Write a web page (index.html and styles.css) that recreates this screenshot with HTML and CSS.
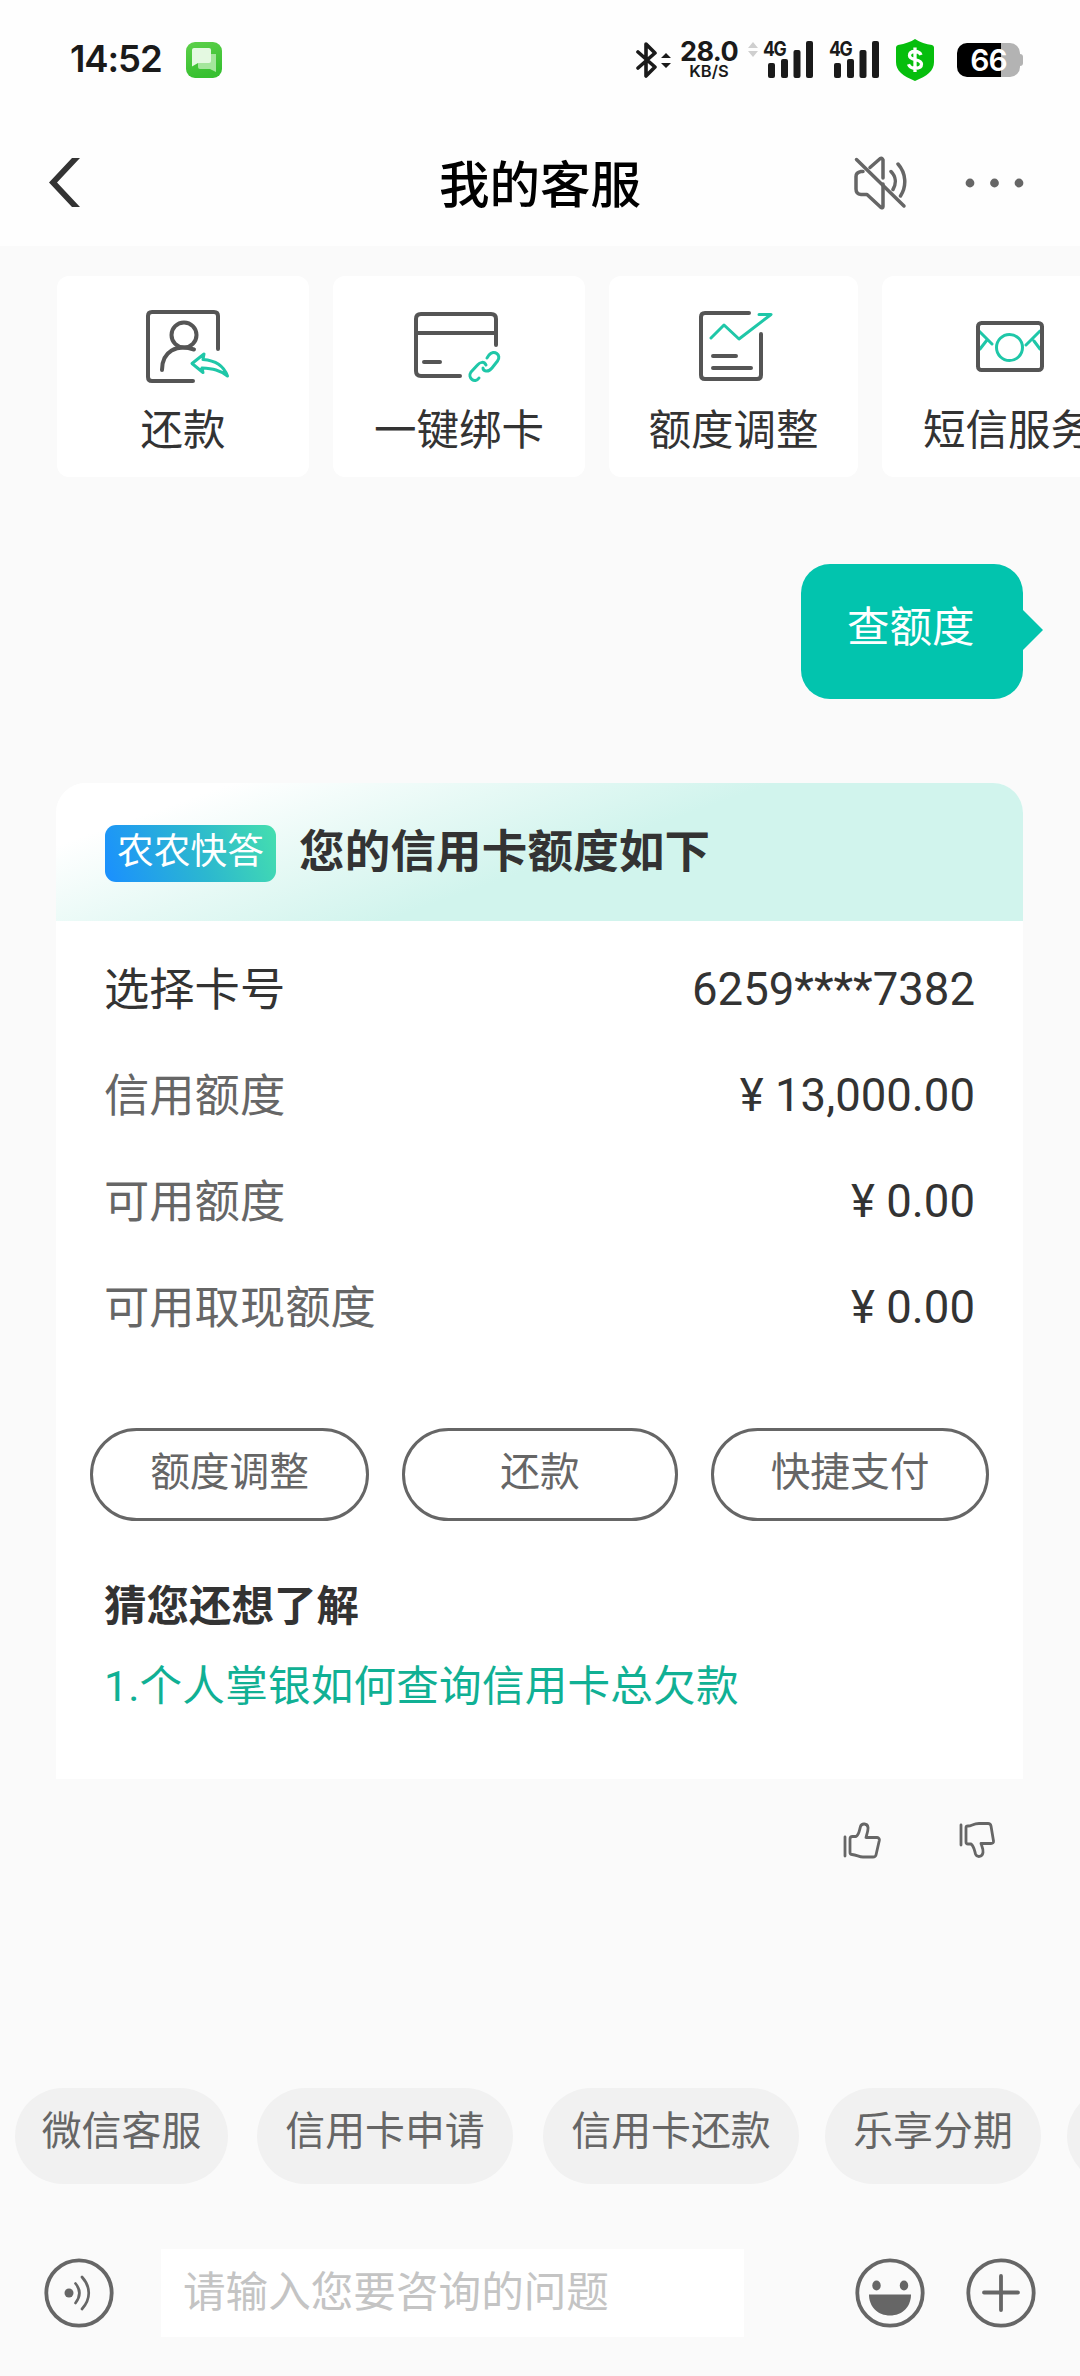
FILE: index.html
```html
<!DOCTYPE html>
<html lang="zh-CN">
<head>
<meta charset="utf-8">
<title>我的客服</title>
<link rel="stylesheet" href="styles.css">
</head>
<body>
<div class="screen">
  <div class="status">
    <span class="clock">14:52</span>
    <svg class="app-icon" width="36" height="36" viewBox="0 0 36 36">
      <defs>
        <linearGradient id="msg" x1="0" y1="0" x2="0.3" y2="1"><stop offset="0" stop-color="#5dd04a"/><stop offset="1" stop-color="#37c030"/></linearGradient>
      </defs>
      <rect width="36" height="36" rx="9" fill="url(#msg)"/>
      <path d="M12 12h18v18l-6-3H14q-2 0-2-2z" fill="#a4e69c"/>
      <path d="M8 6h15q2 0 2 2v11q0 2-2 2H12l-6 3.500V8q0-2 2-2z" fill="#e4f9e1"/>
    </svg>
    <div class="status-right">
      <svg class="bt" width="36" height="38" viewBox="0 0 36 38" fill="none">
        <path d="M2 11l17 15-9 9V3l9 9L2 27" stroke="#1a1a1a" stroke-width="3.600" stroke-linejoin="round" stroke-linecap="round"/>
        <path d="M25 17l5-5 5 5zM25 22l5 5 5-5z" fill="#1a1a1a"/>
      </svg>
      <div class="speed"><span class="speed-num">28.0</span><span class="speed-unit">KB/S</span></div>
      <svg class="updown" width="10" height="16" viewBox="0 0 10 16" fill="#cfcfcf"><path d="M0 6l5-6 5 6zM0 9l5 6 5-6z"/></svg>
      <div class="signal"><span class="net">4G</span>
        <svg width="46" height="37" viewBox="0 0 46 37" fill="#1a1a1a"><rect y="22" width="7" height="15" rx="2"/><rect x="13" y="18" width="7" height="19" rx="2"/><rect x="25.500" y="9" width="7" height="28" rx="2"/><rect x="38" width="7" height="37" rx="2"/></svg>
      </div>
      <div class="signal"><span class="net">4G</span>
        <svg width="46" height="37" viewBox="0 0 46 37" fill="#1a1a1a"><rect y="22" width="7" height="15" rx="2"/><rect x="13" y="18" width="7" height="19" rx="2"/><rect x="25.500" y="9" width="7" height="28" rx="2"/><rect x="38" width="7" height="37" rx="2"/></svg>
      </div>
      <svg class="shield" width="38" height="42" viewBox="0 0 38 42">
        <path d="M19 0c5 3.500 11 5 17 6q2 .5 2 2.500V23c0 9-7 14-19 19C7 37 0 32 0 23V8.500Q0 6.500 2 6 13 4 19 0z" fill="#06be0d"/>
        <path d="M25 16c-1-2.500-3-3.500-6-3.500-3.500 0-5.500 1.500-5.500 4 0 5.500 12 3 12 8.500 0 3-3 4.300-6.500 4.300s-5.500-1.300-6.500-4M19 8.500V33" stroke="#fff" stroke-width="3.300" fill="none"/>
      </svg>
      <div class="battery">66</div>
    </div>
  </div>

  <div class="nav">
    <svg class="back" width="31" height="49" viewBox="0 0 31 49"><path d="M23 0h8L8 24.500 31 49h-8L0 24.500z" fill="#333"/></svg>
    <h1>我的客服</h1>
    <svg class="mute" width="54" height="54" viewBox="0 0 54 54" fill="none" stroke="#666" stroke-width="3.500" stroke-linecap="round" stroke-linejoin="round">
      <path d="M3.500 3.500L51 50"/>
      <path d="M10 15.500H8q-5 1-5 5V33q0 5 5 5.500h6L28 51.500q2 1 2-1V28M30 22V4q-1-2.500-3-1.200L17 11.500"/>
      <path d="M38 15.500c5 5 5.500 12 2 18M45 8c8 9 9 22 2.500 32"/>
    </svg>
    <svg class="more" width="60" height="12" viewBox="0 0 60 12" fill="#666"><circle cx="5" cy="6" r="4.400"/><circle cx="29.500" cy="6" r="4.400"/><circle cx="54" cy="6" r="4.400"/></svg>
  </div>

  <div class="tiles">
    <div class="tile">
      <svg width="76" height="76" viewBox="0 0 76 76" overflow="visible" fill="none" stroke-linecap="round" stroke-linejoin="round">
        <path d="M48 73H7q-4 0-4-4V8q0-4 4-4H69q4 0 4 4V41M17 62C17 43 32 36 49 41.500" stroke="#555" stroke-width="4"/>
        <circle cx="39" cy="27" r="12.500" stroke="#555" stroke-width="4"/>
        <path d="M47 55.500l12-9.500-1 5.500c14 1 21 7 24.500 16.500C75 62 68 60.500 57 60l1 4.500z" stroke="#1fc7a8" stroke-width="3"/>
      </svg>
      <span>还款</span>
    </div>
    <div class="tile">
      <svg width="92" height="76" viewBox="0 0 92 76" fill="none" stroke-linecap="round" stroke-linejoin="round">
        <path d="M47 68H8q-5 0-5-5V11q0-5 5-5H78q5 0 5 5V37M3 25H83M11 54H27" stroke="#555" stroke-width="4"/>
        <path d="M74 50l2-3c5-6 13 0 8.500 6L79 60c-4 5-9 3-9 0M73 57c-2-4-6-3-8.500 0L58 64c-4 6 4 12 8 6" stroke="#1fc7a8" stroke-width="3"/>
      </svg>
      <span>一键绑卡</span>
    </div>
    <div class="tile tile-narrow">
      <svg width="74" height="76" viewBox="0 0 74 76" overflow="visible" fill="none" stroke-linecap="round" stroke-linejoin="round">
        <path d="M52 5H8Q4 5 4 9V67q0 4 4 4H60q4 0 4-4V26M16 48H39M16 60H54" stroke="#555" stroke-width="4"/>
        <path d="M14 30L27 17 42 31 74 6.500H62" stroke="#1fc7a8" stroke-width="3"/>
      </svg>
      <span>额度调整</span>
    </div>
    <div class="tile">
      <svg width="67" height="76" viewBox="0 0 67 76" overflow="visible" fill="none" stroke-linecap="round" stroke-linejoin="round">
        <path d="M4 23L17 36M5 41L12 32M65 23L51 37M65 41L59 33" stroke="#1fc7a8" stroke-width="3"/>
        <circle cx="34.500" cy="39.500" r="13" stroke="#1fc7a8" stroke-width="3"/>
        <rect x="3" y="15" width="64" height="47" rx="3.500" stroke="#555" stroke-width="4"/>
      </svg>
      <span>短信服务</span>
    </div>
  </div>

  <div class="bubble">查额度</div>

  <div class="card">
    <div class="card-head"><span class="badge">农农快答</span><h2>您的信用卡额度如下</h2></div>
    <dl class="rows">
      <div class="row"><dt class="dark">选择卡号</dt><dd>6259****7382</dd></div>
      <div class="row"><dt>信用额度</dt><dd>¥ 13,000.00</dd></div>
      <div class="row"><dt>可用额度</dt><dd>¥ 0.00</dd></div>
      <div class="row"><dt>可用取现额度</dt><dd>¥ 0.00</dd></div>
    </dl>
    <div class="actions"><button>额度调整</button><button>还款</button><button>快捷支付</button></div>
    <h3>猜您还想了解</h3>
    <a class="question">1.个人掌银如何查询信用卡总欠款</a>
  </div>

  <div class="feedback">
    <svg width="38" height="38" viewBox="0 0 38 38" fill="none" stroke="#666" stroke-width="2.800" stroke-linecap="round" stroke-linejoin="round">
      <path d="M2 15V34M7 17q0-2.500 2.500-2.500H13c3-1.500 3-5 4.500-10 1-3.500 7-3.500 7.500 1 .3 3-1 6-2 10H34q2.800.5 2.300 3L33 33q-.5 2-3 2H20c-4 0-6-2-11-2.500q-2 0-2-2z"/>
    </svg>
    <svg width="38" height="38" viewBox="0 0 38 38" fill="none" stroke="#666" stroke-width="2.800" stroke-linecap="round" stroke-linejoin="round">
      <path d="M2 3V23M7 5.500q0-1.500 2-1.500c4 0 5-2.500 11-2.500h9q2.500 0 3 2.500l2.500 15q.3 2.500-2.500 2.500H22c1 3 2.500 6 2 9-.8 5-6 5-7.500 1.500-1-3.500-1.500-8-4.500-10H9q-2 0-2-2z"/>
    </svg>
  </div>

  <div class="chips">
    <span class="chip chip-a">微信客服</span><span class="chip chip-b">信用卡申请</span><span class="chip chip-c">信用卡还款</span><span class="chip chip-d">乐享分期</span><span class="chip chip-e"></span>
  </div>

  <div class="composer">
    <svg class="voice" width="70" height="70" viewBox="0 0 70 70" fill="none" stroke="#666" stroke-linecap="round">
      <circle cx="35" cy="35" r="32.700" stroke-width="3.800"/>
      <circle cx="25" cy="35" r="4.500" fill="#666" stroke="none"/>
      <path d="M31.500 25.500c5 6 5 13 0 19.500M38 19c9 10 9 22 0 32" stroke-width="2.700"/>
    </svg>
    <div class="input">请输入您要咨询的问题</div>
    <svg class="smile" width="70" height="70" viewBox="0 0 70 70">
      <circle cx="35" cy="35" r="32.700" fill="none" stroke="#666" stroke-width="3.800"/>
      <ellipse cx="21.500" cy="27.500" rx="4.200" ry="5" fill="#666"/><ellipse cx="49" cy="27.500" rx="4.200" ry="5" fill="#666"/>
      <path d="M14 36.500H56C56 49 47 57.500 35 57.500S14 49 14 36.500z" fill="#666"/>
    </svg>
    <svg width="70" height="70" viewBox="0 0 70 70" fill="none" stroke="#666" stroke-width="3.800" stroke-linecap="round">
      <circle cx="35" cy="35" r="32.700"/><path d="M35 18V52M18 34.500H52"/>
    </svg>
  </div>
</div>
</body>
</html>
```
FILE: styles.css
```css
* { box-sizing: border-box; margin: 0; padding: 0; }
body {
  background: #fafafa;
  font-family: "Noto Sans CJK SC", sans-serif;
  color: #333;
}
svg { display: block; flex: none; }
.screen {
  width: 1080px;
  height: 2376px;
  overflow: hidden;
  display: flex;
  flex-direction: column;
}

/* system status bar */
.status {
  height: 119px;
  padding: 0 56px 0 70px;
  display: flex;
  align-items: center;
  background: #fefefe;
  font-family: Inter, sans-serif;
  color: #1a1a1a;
  white-space: nowrap;
}
.clock { width: 116px; font-size: 36.500px; font-weight: 600; line-height: 44px; letter-spacing: -1.1px; margin-top: -2px; }
.status-right { margin-left: auto; display: flex; align-items: center; }
.speed { width: 60px; margin-left: 7px; display: flex; flex-direction: column; align-items: center; font-weight: 700; }
.speed-num { font-size: 27px; line-height: 23px; letter-spacing: -0.6px; }
.speed-unit { font-size: 16.500px; line-height: 16px; font-weight: 600; }
.updown { margin: 0 5px 20px 9px; }
.signal { width: 51px; margin-right: 15px; display: flex; justify-content: flex-end; position: relative; }
.net {
  position: absolute;
  left: 0;
  top: -2px;
  font-size: 20px;
  line-height: 20px;
  font-weight: 700;
  letter-spacing: -1.5px;
  transform: scaleX(0.88);
  transform-origin: left;
}
.shield { margin-left: 1px; }
.battery {
  position: relative;
  width: 63px;
  height: 34px;
  margin: 1px 4px 0 23px;
  border-radius: 10px;
  background: linear-gradient(90deg, #000 44px, #b3b3b3 44px);
  color: #fff;
  font-size: 30px;
  line-height: 35px;
  font-weight: 600;
  letter-spacing: -1px;
  text-align: center;
}
.battery::after {
  content: "";
  position: absolute;
  right: -3px;
  top: 11px;
  width: 3px;
  height: 12px;
  border-radius: 0 3px 3px 0;
  background: #b3b3b3;
}

/* title bar */
.nav {
  height: 127px;
  padding: 0 55px 0 49px;
  display: grid;
  grid-template-columns: 50px 1fr 54px 60px;
  column-gap: 58px;
  align-items: center;
  background: #fefefe;
}
.nav h1 { font-size: 50.500px; line-height: 60px; font-weight: 500; color: #000; padding-left: 282px; margin-top: -4px; white-space: nowrap; }

/* shortcut tiles */
.tiles { margin: 30px 0 0 57px; height: 201px; display: flex; gap: 24px; }
.tile {
  flex: none;
  width: 252px;
  padding: 32px 0 0;
  border-radius: 12px;
  background: #fff;
  display: flex;
  flex-direction: column;
  align-items: center;
}
.tile-narrow { width: 249px; }
.tile span { margin-top: 13px; font-size: 42.500px; line-height: 60px; }

/* outgoing message */
.bubble {
  position: relative;
  align-self: flex-end;
  width: 222px;
  height: 135px;
  margin: 87px 57px 0 0;
  padding: 30px 46px 0;
  border-radius: 29px;
  background: #02c4ae;
  color: #fff;
  font-size: 42.500px;
  line-height: 60px;
  white-space: nowrap;
}
.bubble::after {
  content: "";
  position: absolute;
  left: 100%;
  top: 46px;
  border: 20px solid transparent;
  border-left-color: #02c4ae;
  border-right-width: 0;
}

/* answer card */
.card { width: 967px; height: 996px; margin: 84px 0 0 56px; border-radius: 30px 30px 0 0; background: #fff; overflow: hidden; }
.card-head {
  height: 138px;
  padding: 0 49px;
  display: flex;
  align-items: center;
  gap: 23px;
  background: linear-gradient(160.5deg, #fff 13%, #e6f9f5 34%, #d1f4ed 53%, #d1f4ed);
}
.badge {
  width: 171px;
  height: 57px;
  margin-top: 3px;
  border-radius: 11px;
  background: linear-gradient(70deg, #1a8fff, #2cb8cf 55%, #45dfae);
  color: #fff;
  font-size: 36.700px;
  line-height: 46px;
  font-weight: 400;
  text-align: center;
}
.card-head h2 { font-size: 45.500px; line-height: 60px; font-weight: 700; margin-top: -8px; letter-spacing: 0.2px; }
.rows { padding: 15px 48px 0 48px; }
.row { height: 106px; display: flex; justify-content: space-between; align-items: center; }
.row dt { font-size: 45.300px; line-height: 60px; color: #666; margin-top: -6px; }
.row dt.dark { color: #333; }
.row dd { font-family: Roboto, sans-serif; font-size: 45.500px; line-height: 60px; margin-top: 1px; }
.actions { margin-top: 68px; padding: 0 34px; display: grid; grid-template-columns: 279px 276px 278px; gap: 33px; }
.actions button {
  height: 93px;
  padding-bottom: 12px;
  border: 3px solid #666;
  border-radius: 47px;
  background: none;
  font: 39.700px/60px "Noto Sans CJK SC", sans-serif;
  color: #666;
}
.card h3 { margin: 52px 0 0 48px; font-size: 42.500px; line-height: 60px; font-weight: 700; }
.question { display: block; margin: 23px 0 0 48px; font-family: Roboto, "Noto Sans CJK SC", sans-serif; font-size: 42.600px; line-height: 60px; letter-spacing: 0.2px; color: #10b094; }

.feedback { margin: 43px 83px 0 0; display: flex; justify-content: flex-end; gap: 78px; }

/* suggestion chips */
.chips { margin: 228px 0 0 15px; height: 96px; display: flex; }
.chip { flex: none; padding-top: 10px; border-radius: 48px; background: #f1f1f1; color: #666; font-size: 39.900px; line-height: 60px; text-align: center; }
.chip-a { width: 213px; margin-right: 29px; }
.chip-b { width: 256px; margin-right: 30px; }
.chip-c { width: 256px; margin-right: 26px; }
.chip-d { width: 216px; margin-right: 26px; }
.chip-e { width: 216px; }

/* message composer */
.composer { margin: 65px 44px 0; height: 88px; display: flex; align-items: center; }
.input { width: 583px; height: 88px; margin-left: 47px; margin-right: 111px; padding: 10px 22px; background: #fff; color: #c4c4c4; font-size: 42.600px; line-height: 60px; }
.smile { margin-right: 41px; }
```
